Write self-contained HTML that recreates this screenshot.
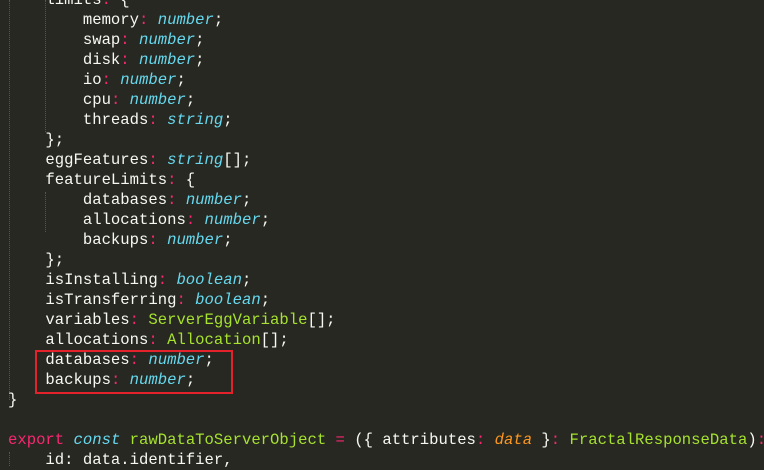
<!DOCTYPE html>
<html><head><meta charset="utf-8"><style>
html,body{margin:0;padding:0;background:#272822;width:764px;height:466px;overflow:hidden}
pre{position:absolute;left:8px;top:-10px;margin:0;font-family:"Liberation Mono","DejaVu Sans Mono",monospace;font-size:15.6px;line-height:20px;color:#f8f8f2;white-space:pre}
.k{color:#f92672}.t{color:#66d9ef;font-style:italic}.g{color:#a6e22e}.o{color:#fd971f;font-style:italic}
.guide{position:absolute;top:0;width:0;border-left:1px dotted #555}
.box{position:absolute;left:35px;top:350px;width:194px;height:40px;border:2px solid #e3222b}
</style></head><body>
<div class="guide" style="left:9px;height:400px"></div>
<div class="guide" style="left:45px;height:132px"></div>
<div class="guide" style="left:45px;top:192px;height:40px"></div>
<div class="guide" style="left:9px;top:452px;height:14px"></div>
<pre>    limits<span class="k">:</span> {
        memory<span class="k">:</span> <span class="t">number</span>;
        swap<span class="k">:</span> <span class="t">number</span>;
        disk<span class="k">:</span> <span class="t">number</span>;
        io<span class="k">:</span> <span class="t">number</span>;
        cpu<span class="k">:</span> <span class="t">number</span>;
        threads<span class="k">:</span> <span class="t">string</span>;
    };
    eggFeatures<span class="k">:</span> <span class="t">string</span>[];
    featureLimits<span class="k">:</span> {
        databases<span class="k">:</span> <span class="t">number</span>;
        allocations<span class="k">:</span> <span class="t">number</span>;
        backups<span class="k">:</span> <span class="t">number</span>;
    };
    isInstalling<span class="k">:</span> <span class="t">boolean</span>;
    isTransferring<span class="k">:</span> <span class="t">boolean</span>;
    variables<span class="k">:</span> <span class="g">ServerEggVariable</span>[];
    allocations<span class="k">:</span> <span class="g">Allocation</span>[];
    databases<span class="k">:</span> <span class="t">number</span>;
    backups<span class="k">:</span> <span class="t">number</span>;
}

<span class="k">export</span> <span class="t">const</span> <span class="g">rawDataToServerObject</span> <span class="k">=</span> ({ attributes<span class="k">:</span> <span class="o">data</span> }<span class="k">:</span> <span class="g">FractalResponseData</span>)<span class="k">:</span>
    id: data.identifier,
</pre>
<div class="box"></div>
</body></html>
